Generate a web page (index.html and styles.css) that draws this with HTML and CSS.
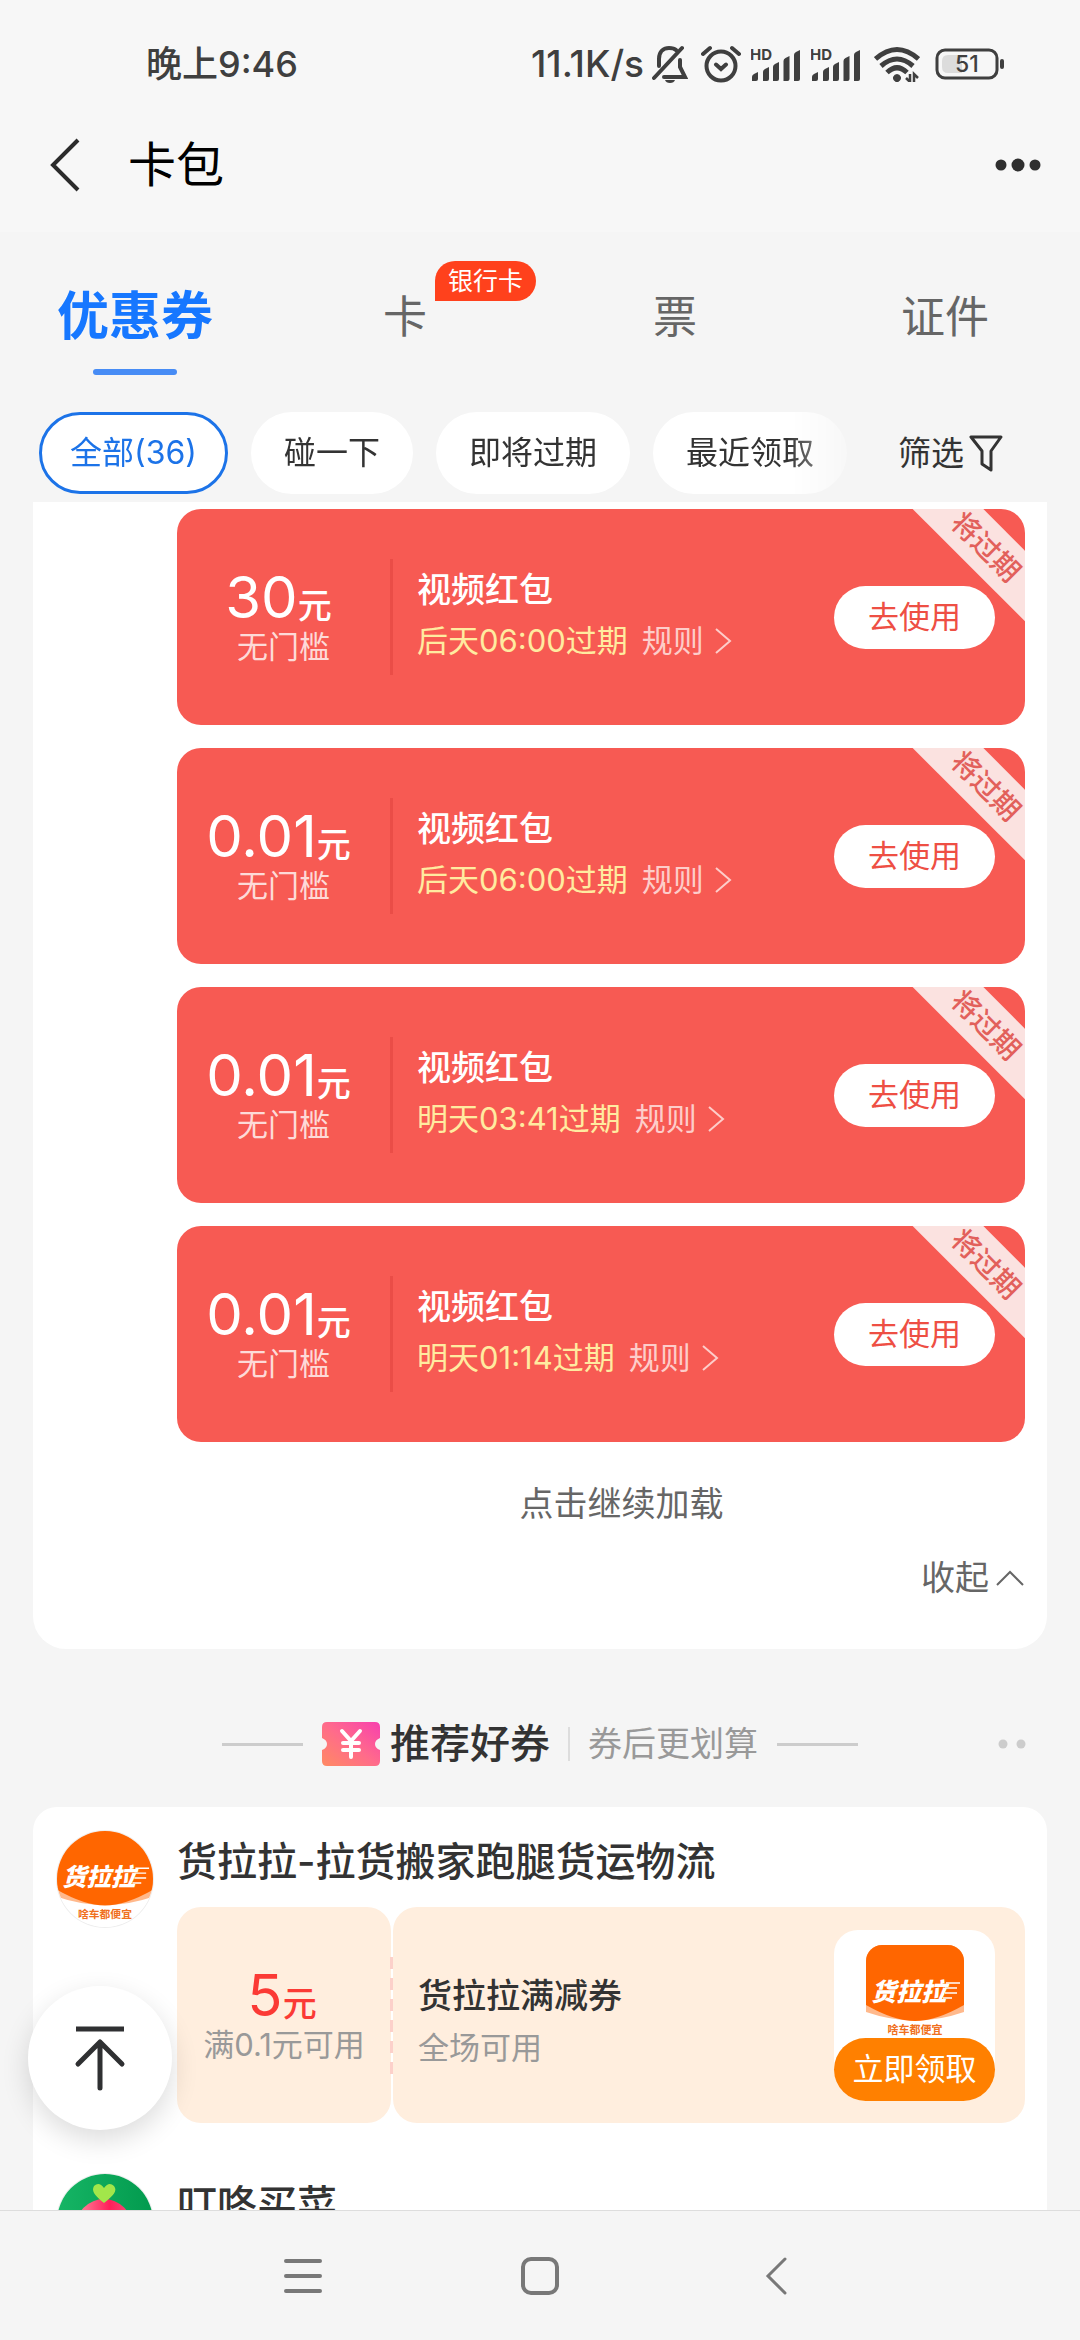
FILE: index.html
```html
<!DOCTYPE html>
<html lang="zh-CN">
<head>
<meta charset="utf-8">
<meta name="viewport" content="width=device-width, initial-scale=1">
<title>卡包</title>
<link rel="stylesheet" href="styles.css">
</head>
<body>
<svg class="defs" aria-hidden="true">
  <defs>
    <linearGradient id="ticket-fill" x1="0" y1="1" x2="1" y2="0">
      <stop offset="0" stop-color="#ff8a62"/><stop offset=".5" stop-color="#ff6b8b"/><stop offset="1" stop-color="#f83fae"/>
    </linearGradient>
    <linearGradient id="leaf-fill" x1="0" y1="0" x2="1" y2="0">
      <stop offset="0" stop-color="#16b565"/><stop offset="1" stop-color="#029a4e"/>
    </linearGradient>
    <linearGradient id="radish-fill" x1="0" y1="0" x2="1" y2="0">
      <stop offset="0" stop-color="#ff8aa0"/><stop offset=".6" stop-color="#ff1f5a"/><stop offset="1" stop-color="#f5507a"/>
    </linearGradient>
    <symbol id="signal" viewBox="0 0 50 36">
      <text x="-1" y="14" class="hd">HD</text>
      <path fill="#3f3f3f" d="M1 35v-4q0-2 2-3l4-2v7q0 2-2 2zM12 35v-9q0-2 2-3l4-2v12q0 2-2 2zM22 35v-14q0-2 2-3l4-2v17q0 2-2 2zM32.500 35v-20q0-2 2-3l4-2v23q0 2-2 2zM43 35v-26q0-2 2-3l4-2v29q0 2-2 2z"/>
    </symbol>
    <symbol id="huolala" viewBox="0 0 98 98">
      <rect width="98" height="98" fill="#fff"/>
      <path d="M0 0H98V67Q49 84 0 67Z" fill="#ffb98c"/>
      <path d="M0 0H98V60Q70 76 49 76T0 60Z" fill="#ff6600"/>
      <text x="5" y="56" class="logo-name">货拉拉</text>
      <path d="M80 38h14M79 43h12M79 48h12M77 53h9" stroke="#fff" stroke-width="1.500"/>
      <text x="49" y="89" text-anchor="middle" class="logo-tag">啥车都便宜</text>
    </symbol>
  </defs>
</svg>
<div class="app">
  <header class="top">
    <div class="status">
      <span class="status-time">晚上9:46</span>
      <div class="status-icons">
        <span class="speed">11.1K/s</span>
        <svg class="bell" width="36" height="38" viewBox="0 0 36 38" fill="none" stroke="#3f3f3f" stroke-width="4" stroke-linecap="round"><path d="M7 21V14C7 6 12 3 17 3q5 0 7 2M30 3L2 33M28 15v7l5 10H12"/><path d="M13 35h10q-1 3-5 3t-5-3z" fill="#3f3f3f" stroke="none"/></svg>
        <svg class="alarm" width="40" height="38" viewBox="0 0 40 38" fill="none" stroke="#3f3f3f" stroke-width="4" stroke-linecap="round"><circle cx="20" cy="21" r="14.500"/><path d="M2 9l7-6M38 9l-7-6M15 19.500l5 4.500 5-4.500"/></svg>
        <svg class="signal" width="50" height="36"><use href="#signal"/></svg>
        <svg class="signal" width="50" height="36"><use href="#signal"/></svg>
        <svg class="wifi" width="46" height="36" viewBox="0 0 46 36" fill="none" stroke="#3f3f3f" stroke-width="5"><path d="M1.500 13Q23-6 44.500 13M7 20Q23 6 39 20M13 26.500Q23 17 33 26.500"/><path d="M23 28a4.500 4 0 0 1 3 6.500l-3 2.500-3-2.500a4.500 4 0 0 1 3-6.500z" fill="#3f3f3f" stroke="none"/><path d="M36 28v8l-4-4M40 36v-8l4 4" stroke-width="2.500"/></svg>
        <svg class="battery" width="70" height="32" viewBox="0 0 70 32"><rect x="2" y="2" width="60" height="28" rx="8" fill="none" stroke="#3f3f3f" stroke-width="3"/><path d="M13 7h14v18H13q-6 0-6-6v-6q0-6 6-6z" fill="#dcdcdc"/><rect x="65" y="11" width="4" height="10" rx="2" fill="#3f3f3f"/><text x="32" y="24" text-anchor="middle" class="battery-level">51</text></svg>
      </div>
    </div>
    <div class="title-bar">
      <button class="icon-button" aria-label="返回"><svg width="32" height="54" viewBox="0 0 32 54" fill="none" stroke="#2b2b2b" stroke-width="4"><path d="M30 2L5 27l25 25"/></svg></button>
      <h1 class="page-title">卡包</h1>
      <button class="icon-button more" aria-label="更多"><svg width="46" height="14" viewBox="0 0 46 14" fill="#2f2f2f"><circle cx="6" cy="7" r="5.500"/><circle cx="23" cy="7" r="6.500"/><circle cx="40" cy="7" r="5.500"/></svg></button>
    </div>
  </header>

  <nav class="tabs">
    <button class="tab tab-active"><span class="tab-label">优惠券</span></button>
    <button class="tab"><span class="tab-label">卡<span class="tab-badge">银行卡</span></span></button>
    <button class="tab"><span class="tab-label">票</span></button>
    <button class="tab"><span class="tab-label">证件</span></button>
  </nav>

  <div class="filters">
    <div class="chips">
      <button class="chip chip-active">全部(36)</button>
      <button class="chip">碰一下</button>
      <button class="chip">即将过期</button>
      <button class="chip">最近领取</button>
    </div>
    <button class="filter-button">筛选<svg width="34" height="38" viewBox="0 0 34 38" fill="none" stroke="#333" stroke-width="3" stroke-linejoin="round"><path d="M2 3h30L22 17v19l-9-6V17z"/></svg></button>
  </div>

  <main class="content">
    <section class="panel mine">
      <article class="coupon">
        <div class="value"><p class="amount">30<small class="unit">元</small></p><p class="condition">无门槛</p></div>
        <div class="info"><h2 class="name">视频红包</h2><p class="detail"><span class="expiry">后天06:00过期</span><a class="rules" href="#rules">规则<svg width="18" height="28" viewBox="0 0 18 28" fill="none" stroke="currentColor" stroke-width="2"><path d="M2 2l14 12L2 26"/></svg></a></p></div>
        <button class="pill use">去使用</button>
        <span class="ribbon">将过期</span>
      </article>
      <article class="coupon">
        <div class="value"><p class="amount">0.01<small class="unit">元</small></p><p class="condition">无门槛</p></div>
        <div class="info"><h2 class="name">视频红包</h2><p class="detail"><span class="expiry">后天06:00过期</span><a class="rules" href="#rules">规则<svg width="18" height="28" viewBox="0 0 18 28" fill="none" stroke="currentColor" stroke-width="2"><path d="M2 2l14 12L2 26"/></svg></a></p></div>
        <button class="pill use">去使用</button>
        <span class="ribbon">将过期</span>
      </article>
      <article class="coupon">
        <div class="value"><p class="amount">0.01<small class="unit">元</small></p><p class="condition">无门槛</p></div>
        <div class="info"><h2 class="name">视频红包</h2><p class="detail"><span class="expiry">明天03:41过期</span><a class="rules" href="#rules">规则<svg width="18" height="28" viewBox="0 0 18 28" fill="none" stroke="currentColor" stroke-width="2"><path d="M2 2l14 12L2 26"/></svg></a></p></div>
        <button class="pill use">去使用</button>
        <span class="ribbon">将过期</span>
      </article>
      <article class="coupon">
        <div class="value"><p class="amount">0.01<small class="unit">元</small></p><p class="condition">无门槛</p></div>
        <div class="info"><h2 class="name">视频红包</h2><p class="detail"><span class="expiry">明天01:14过期</span><a class="rules" href="#rules">规则<svg width="18" height="28" viewBox="0 0 18 28" fill="none" stroke="currentColor" stroke-width="2"><path d="M2 2l14 12L2 26"/></svg></a></p></div>
        <button class="pill use">去使用</button>
        <span class="ribbon">将过期</span>
      </article>
      <div class="list-actions">
        <button class="load-more">点击继续加载</button>
        <button class="collapse">收起<svg width="30" height="18" viewBox="0 0 30 18" fill="none" stroke="#666" stroke-width="2"><path d="M2 16L15 3l13 13"/></svg></button>
      </div>
    </section>

    <div class="section-head">
      <span class="rule"></span>
      <svg class="ticket" width="58" height="44" viewBox="0 0 58 44"><path fill="url(#ticket-fill)" d="M5 0H53q5 0 5 5V16q-5 2-5 6t5 6V39q0 5-5 5H5q-5 0-5-5V28q5-2 5-6t-5-6V5q0-5 5-5z"/><path d="M20 9l9 10 9-10M29 19v16M21 21h16M21 28h16" fill="none" stroke="#fff" stroke-width="4" stroke-linecap="round"/></svg>
      <h2 class="section-title">推荐好券</h2>
      <span class="separator"></span>
      <span class="section-note">券后更划算</span>
      <span class="rule"></span>
      <svg class="section-dots" width="28" height="10" viewBox="0 0 28 10" fill="#ccc"><circle cx="5" cy="5" r="4.500"/><circle cx="23" cy="5" r="4.500"/></svg>
    </div>

    <section class="panel offers">
      <article class="offer">
        <svg class="avatar" width="96" height="96" viewBox="0 0 98 98"><use href="#huolala" width="98" height="98"/></svg>
        <div class="offer-body">
          <h3 class="shop">货拉拉-拉货搬家跑腿货运物流</h3>
          <div class="deal">
            <div class="deal-value"><p class="amount">5<small class="unit">元</small></p><p class="condition">满0.1元可用</p></div>
            <div class="deal-main">
              <div class="deal-info"><h4 class="deal-name">货拉拉满减券</h4><p class="deal-scope">全场可用</p></div>
              <div class="deal-side">
                <svg class="deal-logo" width="98" height="98"><use href="#huolala" width="98" height="98"/></svg>
                <button class="pill claim">立即领取</button>
              </div>
            </div>
          </div>
        </div>
      </article>
      <article class="offer">
        <svg class="avatar" width="96" height="96" viewBox="0 0 96 96"><rect width="96" height="96" fill="url(#leaf-fill)"/><circle cx="47" cy="53" r="28" fill="url(#radish-fill)"/><path d="M47 29C38 22 34 17 37 12q5-5 10 2 5-7 10-2c4 5-1 10-10 17z" fill="#a2e64a"/></svg>
        <div class="offer-body"><h3 class="shop">叮咚买菜</h3></div>
      </article>
    </section>
  </main>

  <button class="to-top" aria-label="回到顶部"><svg width="54" height="66" viewBox="0 0 54 66" fill="none" stroke="#2f3032" stroke-width="5"><path d="M3 4h48"/><path d="M27 17v46M5 39l22-22 22 22" stroke-linecap="round" stroke-linejoin="round"/></svg></button>

  <footer class="system-nav">
    <button class="nav-key" aria-label="最近任务"><svg width="40" height="40" viewBox="0 0 40 40" stroke="#787878" stroke-width="4" stroke-linecap="round"><path d="M3 5h34M3 20h34M3 35h34"/></svg></button>
    <button class="nav-key" aria-label="主页"><svg width="40" height="40" viewBox="0 0 40 40" fill="none" stroke="#787878" stroke-width="4"><rect x="3" y="3" width="34" height="34" rx="8"/></svg></button>
    <button class="nav-key" aria-label="返回"><svg width="40" height="40" viewBox="0 0 40 40" fill="none" stroke="#787878" stroke-width="3" stroke-linecap="round"><path d="M28 3L11 20l17 17"/></svg></button>
  </footer>
</div>
</body>
</html>
```
FILE: styles.css
```css
* { box-sizing: border-box; }

body {
  margin: 0;
  background: #f5f5f5;
  color: #333;
  font-family: Inter, "Noto Sans CJK SC", sans-serif;
}

h1, h2, h3, h4, p { margin: 0; font-weight: 400; }
svg { display: block; flex: none; }
a { color: inherit; text-decoration: none; }

button {
  margin: 0;
  padding: 0;
  border: 0;
  background: none;
  color: inherit;
  font: inherit;
  white-space: nowrap;
}

.defs { position: absolute; width: 0; height: 0; }

.app {
  display: flex;
  flex-direction: column;
  height: 100vh;
  overflow: hidden;
}

/* Status and title bars */
.top { flex: none; background: #f7f7f7; }

.status {
  display: flex;
  align-items: center;
  justify-content: space-between;
  height: 98px;
  padding: 30px 75px 0 146px;
  color: #3f3f3f;
  font-size: 36px;
  font-weight: 500;
  line-height: 40px;
}

.status-icons { display: flex; align-items: center; }
.speed { font-size: 37px; }
.bell { margin-left: 8px; }
.alarm { margin-left: 13px; }
.signal { margin-left: 10px; }
.wifi { margin-left: 13px; }
.battery { margin-left: 15px; }
.hd { font-size: 15px; font-weight: 700; fill: #3f3f3f; }
.battery-level { font-size: 23px; font-weight: 500; fill: #3f3f3f; }

.title-bar {
  display: flex;
  align-items: center;
  height: 134px;
  padding: 0 39px 0 48px;
}

.page-title {
  flex: 1;
  margin-left: 48px;
  color: #000;
  font-size: 48px;
  line-height: 56px;
}

/* Category tabs */
.tabs {
  display: grid;
  grid-template-columns: repeat(4, 1fr);
  flex: none;
  padding-top: 33px;
}

.tab {
  display: flex;
  flex-direction: column;
  align-items: center;
  color: #666;
  font-size: 44px;
}

.tab-label { position: relative; line-height: 104px; }
.tab-active { color: #1677ff; font-size: 52px; font-weight: 700; }

.tab-active::after {
  content: "";
  width: 84px;
  height: 6px;
  border-radius: 3px;
  background: #478cf5;
}

.tab-badge {
  position: absolute;
  left: 100%;
  top: -4px;
  margin-left: 8px;
  padding: 0 13px;
  border-radius: 20px 20px 20px 0;
  background: #ff411c;
  color: #fff;
  font-size: 25px;
  line-height: 40px;
}

/* Filter chips */
.filters {
  display: flex;
  align-items: center;
  justify-content: space-between;
  flex: none;
  padding: 37px 77px 8px 39px;
}

.chips {
  display: flex;
  gap: 23px;
  -webkit-mask-image: linear-gradient(to left, rgba(0, 0, 0, .3), #000 60px);
  mask-image: linear-gradient(to left, rgba(0, 0, 0, .3), #000 60px);
}

.chip {
  height: 82px;
  padding: 0 33px;
  border-radius: 41px;
  background: #fff;
  font-size: 32px;
  line-height: 40px;
}

.chip-active { padding: 0 28px; border: 3px solid #1c73e8; color: #1c73e8; }

.filter-button {
  display: flex;
  align-items: center;
  gap: 5px;
  font-size: 33px;
  line-height: 40px;
}

/* Scrolling content */
.content {
  flex: 1;
  min-height: 0;
  padding: 0 33px;
  overflow: hidden;
}

.panel { background: #fff; }

.mine {
  display: flex;
  flex-direction: column;
  gap: 23px;
  padding: 7px 22px 45px 144px;
  border-radius: 0 0 33px 33px;
}

.coupon {
  position: relative;
  display: flex;
  align-items: center;
  height: 216px;
  padding-right: 30px;
  overflow: hidden;
  border-radius: 24px;
  background: #f75a53;
  color: #fff;
}

.value {
  flex: none;
  width: 216px;
  padding: 8px 0;
  border-right: 3px solid #ea4d47;
  text-align: center;
}

.amount { padding-right: 10px; font-size: 58px; line-height: 60px; }
.unit { font-size: 34px; font-weight: 500; line-height: 34px; }
.condition { font-size: 31px; line-height: 40px; }
.value .condition { color: #fddad8; }

.info { flex: 1; padding-left: 24px; }
.name { font-size: 34px; font-weight: 500; line-height: 48px; }

.detail {
  display: flex;
  align-items: center;
  gap: 14px;
  font-size: 31px;
  line-height: 54px;
}

.expiry { color: #ffeba0; }
.rules { display: flex; align-items: center; gap: 10px; color: #fdcdca; }

.pill {
  flex: none;
  width: 161px;
  height: 63px;
  border-radius: 32px;
  font-size: 31px;
  line-height: 40px;
}

.use { background: #fff; color: #ee4f44; }

.ribbon {
  position: absolute;
  top: 13px;
  right: -61px;
  width: 200px;
  background: #fbe2e0;
  color: #e2605b;
  font-size: 28px;
  font-weight: 500;
  line-height: 50px;
  text-align: center;
  transform: rotate(45deg);
}

.list-actions {
  display: flex;
  flex-direction: column;
  gap: 22px;
  color: #666;
  font-size: 34px;
  line-height: 52px;
}

.load-more { align-self: center; margin: 13px 0 0 41px; }
.collapse { display: flex; align-items: center; align-self: flex-end; gap: 6px; }

/* Recommended offers */
.section-head {
  position: relative;
  display: flex;
  align-items: center;
  justify-content: center;
  height: 158px;
  padding-top: 32px;
  line-height: 48px;
}

.rule { width: 81px; height: 3px; background: #ccc; }
.ticket { margin: 0 10px 0 19px; }
.section-title { font-size: 40px; font-weight: 500; }
.separator { width: 2px; height: 34px; margin: 0 18px; background: #ddd; }
.section-note { margin-right: 19px; color: #999; font-size: 34px; }
.section-dots { position: absolute; right: 21px; }

.offers {
  display: flex;
  flex-direction: column;
  gap: 51px;
  padding: 24px 22px 48px 24px;
  border-radius: 24px 24px 0 0;
}

.offer { display: flex; gap: 24px; }
.avatar { border-radius: 50%; box-shadow: 0 0 0 1px #eee; }
.logo-name { font-size: 25px; font-weight: 900; font-style: italic; fill: #fff; }
.logo-tag { font-size: 11px; font-weight: 700; fill: #f07020; }
.offer-body { flex: 1; }
.shop { font-size: 40px; font-weight: 500; line-height: 62px; }
.deal { display: flex; gap: 2px; height: 216px; margin-top: 14px; }

.deal-value,
.deal-main {
  display: flex;
  border-radius: 24px;
  background: #ffeede;
}

.deal-value {
  position: relative;
  flex: none;
  flex-direction: column;
  justify-content: center;
  width: 214px;
  color: #999;
  text-align: center;
}

.deal-value .amount { padding-right: 4px; color: #fb3a35; }

.deal-value::after {
  content: "";
  position: absolute;
  top: 50px;
  right: -2px;
  width: 3px;
  height: 118px;
  background: repeating-linear-gradient(#fcd0ca 0 12px, transparent 12px 21px);
}

.deal-main { flex: 1; align-items: center; padding: 0 30px 0 25px; }
.deal-info { flex: 1; padding-top: 14px; line-height: 52px; }
.deal-name { font-size: 34px; font-weight: 500; }
.deal-scope { color: #999; font-size: 31px; }

.deal-side {
  display: flex;
  flex-direction: column;
  align-items: center;
  padding-top: 15px;
  border-radius: 24px 24px 32px 32px;
  background: #fff;
}

.deal-logo { margin-bottom: -5px; border-radius: 16px 16px 0 0; }
.claim { position: relative; background: #ff8000; color: #fff; }

.to-top {
  position: fixed;
  left: 28px;
  bottom: 210px;
  display: flex;
  align-items: center;
  justify-content: center;
  width: 144px;
  height: 144px;
  border-radius: 50%;
  background: #fff;
  box-shadow: 0 10px 28px rgba(0, 0, 0, .14);
}

/* System navigation */
.system-nav {
  display: flex;
  align-items: center;
  justify-content: center;
  gap: 197px;
  flex: none;
  height: 130px;
  border-top: 1px solid #ddd;
}
```
